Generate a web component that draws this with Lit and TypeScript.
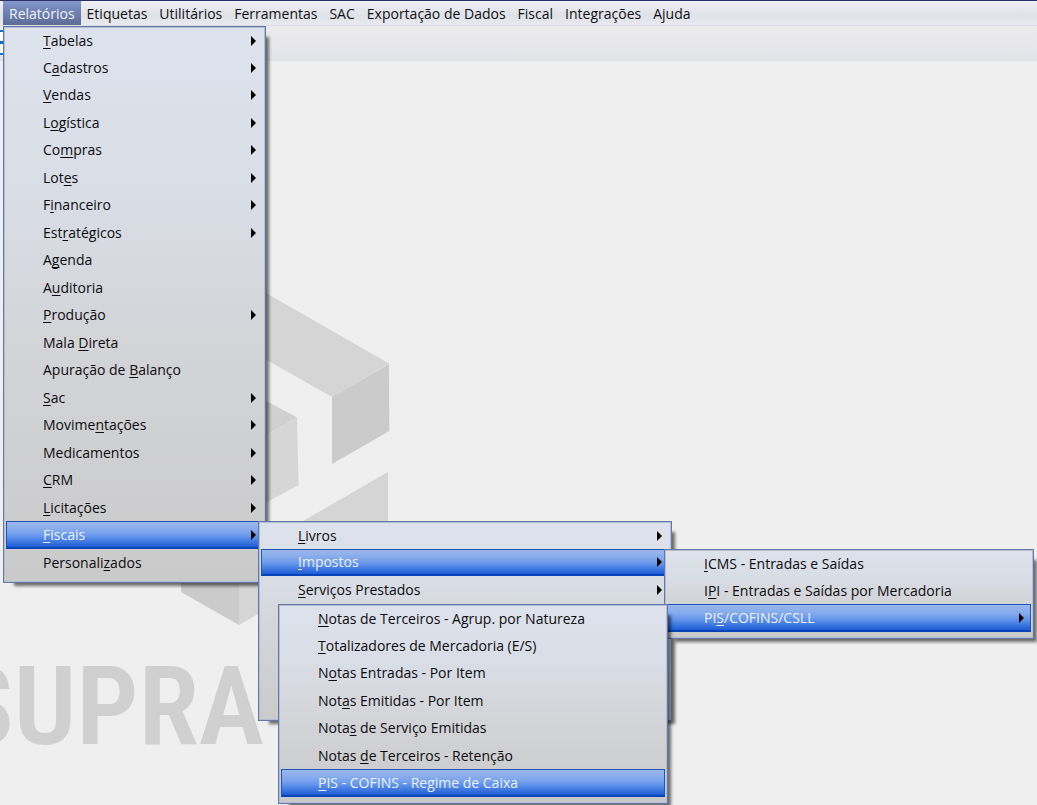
import { LitElement, html, css, nothing, TemplateResult } from "lit";
import { customElement, property } from "lit/decorators.js";

interface Entry {
  /** Label; the access key is the letter after "&". */
  label: string;
  sub?: boolean;
  open?: Menu;
  selected?: boolean;
}

interface Menu {
  name: string;
  entries: Entry[];
}

const leaf = (label: string): Entry => ({ label });
const branch = (label: string): Entry => ({ label, sub: true });

const pisMenu: Menu = {
  name: "pis",
  entries: [
    leaf("&Notas de Terceiros - Agrup. por Natureza"),
    leaf("&Totalizadores de Mercadoria (E/S)"),
    leaf("N&otas Entradas - Por Item"),
    leaf("Not&as Emitidas - Por Item"),
    leaf("Nota&s de Serviço Emitidas"),
    leaf("Notas &de Terceiros - Retenção"),
    { label: "&PIS - COFINS - Regime de Caixa", selected: true },
  ],
};

const taxMenu: Menu = {
  name: "tax",
  entries: [
    leaf("&ICMS - Entradas e Saídas"),
    leaf("I&PI - Entradas e Saídas por Mercadoria"),
    { label: "PI&S/COFINS/CSLL", sub: true, selected: true, open: pisMenu },
  ],
};

const fiscalMenu: Menu = {
  name: "fiscal",
  entries: [
    branch("&Livros"),
    { label: "&Impostos", sub: true, selected: true, open: taxMenu },
    branch("&Serviços Prestados"),
  ],
};

const reportsMenu: Menu = {
  name: "reports",
  entries: [
    branch("&Tabelas"),
    branch("C&adastros"),
    branch("&Vendas"),
    branch("L&ogística"),
    branch("Co&mpras"),
    branch("Lot&es"),
    branch("F&inanceiro"),
    branch("Est&ratégicos"),
    leaf("A&genda"),
    leaf("A&uditoria"),
    branch("&Produção"),
    leaf("Mala &Direta"),
    leaf("Apuração de &Balanço"),
    branch("&Sac"),
    branch("Movime&ntações"),
    branch("Medicamentos"),
    branch("&CRM"),
    branch("&Licitações"),
    { label: "&Fiscais", sub: true, selected: true, open: fiscalMenu },
    leaf("Personali&zados"),
  ],
};

const barItems = [
  "Relatórios",
  "Etiquetas",
  "Utilitários",
  "Ferramentas",
  "SAC",
  "Exportação de Dados",
  "Fiscal",
  "Integrações",
  "Ajuda",
];

@customElement("menu-panel")
class MenuPanel extends LitElement {
  @property({ attribute: false }) menu!: Menu;

  static styles = css`
    :host {
      display: block;
    }
    .panel {
      box-sizing: border-box;
      margin: 0;
      padding: 1px 2px 6px;
      list-style: none;
      border: 1px solid #6478a8;
      background: linear-gradient(#dee2ec, #d9dde6 30%, #d4d5d9 55%, #cacaca);
      box-shadow: inset 0 0 0 1px #b4bdd2, 7px 7px 3px -4px rgba(0, 0, 0, 0.55);
    }
    .fiscal {
      padding-bottom: 116px;
    }
    .row {
      position: relative;
      height: 28px;
    }
    .row:nth-child(even) {
      height: 27px;
    }
    .row:first-child {
      height: 26px;
    }
    .item {
      box-sizing: border-box;
      display: flex;
      align-items: center;
      justify-content: space-between;
      width: 100%;
      height: 100%;
      margin: 0;
      padding: 0 6px 0 36px;
      border: 1px solid transparent;
      background: none;
      color: #0c0c10;
      font: inherit;
      text-align: left;
      white-space: nowrap;
    }
    .selected {
      border-color: #1c55b4;
      border-bottom: 2px solid #0844b8;
      background: linear-gradient(#9cb8ec, #82a8ec 35%, #6898ec 55%, #1c5cd6);
      color: #e8f0ff;
    }
    u {
      text-decoration-thickness: 1px;
      text-underline-offset: 2px;
      text-decoration-skip-ink: none;
    }
    .arrow {
      flex: none;
      width: 5px;
      height: 10px;
      fill: #000;
    }
    .flyout {
      position: absolute;
      z-index: 1;
      top: 0;
    }
    .flyout-fiscal {
      left: 252px;
      width: 414px;
    }
    .flyout-tax {
      left: 403px;
      width: 370px;
    }
    .flyout-pis {
      left: -389px;
      width: 390px;
    }
  `;

  private label(text: string): TemplateResult {
    const at = text.indexOf("&");
    if (at < 0) return html`<span>${text}</span>`;
    return html`<span>${text.slice(0, at)}<u>${text[at + 1]}</u>${text.slice(at + 2)}</span>`;
  }

  render() {
    return html`<ul class="panel ${this.menu.name}" role="menu">
      ${this.menu.entries.map(
        (e) => html`<li class="row" role="none">
          <button
            class="item ${e.selected ? "selected" : ""}"
            role="menuitem"
            type="button"
            aria-haspopup=${e.sub ? "menu" : nothing}
          >
            ${this.label(e.label)}
            ${e.sub
              ? html`<svg class="arrow" viewBox="0 0 5 10" aria-hidden="true"><path d="M0 0L5 5L0 10Z" /></svg>`
              : nothing}
          </button>
          ${e.open
            ? html`<menu-panel class="flyout flyout-${e.open.name}" .menu=${e.open}></menu-panel>`
            : nothing}
        </li>`
      )}
    </ul>`;
  }
}

@customElement("app-root")
class AppRoot extends LitElement {
  static styles = css`
    :host {
      display: flex;
      flex-direction: column;
      position: relative;
      box-sizing: border-box;
      height: 100vh;
      overflow: hidden;
      background: #efefef;
      font-family: "Open Sans", "Noto Sans", sans-serif;
      font-size: 14px;
      line-height: 20px;
    }
    .bar {
      display: flex;
      box-sizing: border-box;
      height: 26px;
      padding-left: 3px;
      border-top: 1px solid #2c3064;
      border-bottom: 1px solid #dcdfe4;
      background: linear-gradient(#eff0f4, #e0e2e9 60%, #e8eaf0);
    }
    .top {
      margin: 0;
      padding: 2px 6px 0;
      border: 0;
      background: none;
      color: #101014;
      font: inherit;
      white-space: nowrap;
    }
    .active {
      background: linear-gradient(#8496cc, #6e80b0 50%, #5c6c94);
      color: #f0f2fa;
    }
    .tools {
      box-sizing: border-box;
      height: 35px;
      padding-top: 4px;
      background: linear-gradient(#ebebec, #e8e8ea 50%, #e2e4ea);
    }
    .tool {
      display: block;
      width: 5px;
      height: 26px;
    }
    .desk {
      flex: 1;
    }
    .mark {
      position: absolute;
      left: 0;
      top: 0;
      width: 400px;
      height: 805px;
    }
    .brand {
      font-family: "Roboto Condensed", "Liberation Sans Narrow", "Liberation Sans", sans-serif;
      font-weight: 600;
      font-size: 110px;
      fill: #d0d0d0;
    }
    .dropdown {
      position: absolute;
      z-index: 1;
      left: 3px;
      top: 26px;
      width: 263px;
    }
  `;

  render() {
    return html`
      <svg class="mark" viewBox="0 0 400 805" role="img" aria-label="SUPRA">
        <path fill="#d5d5d5" d="M200 255L266 293L389 363.500L332 397L200 322Z" />
        <path fill="#cbcbcb" d="M389 364L389.300 431L332 464V397Z" />
        <path fill="#d0d0d0" d="M240 387L297 417.500L240 450Z" />
        <path fill="#d6d6d6" d="M297 417.500L298.500 485L240 517V450Z" />
        <path fill="#d5d5d5" d="M388 472V539L239 625V558Z" />
        <path fill="#cbcbcb" d="M181 525L239 558V625L181 592Z" />
        <text class="brand" x="264" y="744" text-anchor="end">SUPRA</text>
      </svg>
      <nav class="bar" role="menubar">
        ${barItems.map(
          (t, i) => html`<button class="top ${i === 0 ? "active" : ""}" role="menuitem" type="button">${t}</button>`
        )}
      </nav>
      <div class="tools">
        <svg class="tool" viewBox="0 0 5 26" aria-hidden="true">
          <path fill="#fff" d="M0 1H5V24H0Z" />
          <path fill="#1470c4" d="M0 0H5V2H0ZM0 11H5V14H0ZM0 23H5V25H0Z" />
        </svg>
      </div>
      <main class="desk"></main>
      <menu-panel class="dropdown" .menu=${reportsMenu}></menu-panel>
    `;
  }
}
